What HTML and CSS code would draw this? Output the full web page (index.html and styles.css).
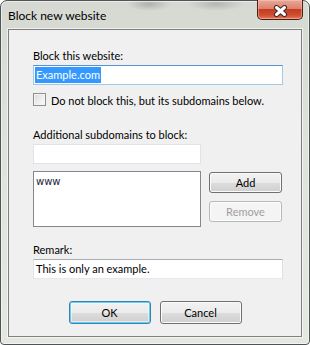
FILE: index.html
```html
<!DOCTYPE html>
<html lang="en">
<head>
    <meta charset="UTF-8">
    <meta name="viewport" content="width=device-width, initial-scale=1.0">
    <title>Block new website</title>
    <link rel="stylesheet" href="styles.css">
</head>
<body>
    <div class="window">
        <div class="titlebar">
            <span class="title">Block new website</span>
            <button class="close-btn" aria-label="Close">
                <svg width="15" height="12" viewBox="0 0 15 12">
                    <path d="M3.5 2.5 L11.5 9.5 M11.5 2.5 L3.5 9.5" stroke="#3b2a26" stroke-width="5" stroke-linecap="round"/>
                    <path d="M3.5 2.5 L11.5 9.5 M11.5 2.5 L3.5 9.5" stroke="#ffffff" stroke-width="3" stroke-linecap="round"/>
                </svg>
            </button>
        </div>

        <div class="client">
            <div class="label">Block this website:</div>
            <div class="textbox focused"><span class="selected">Example.com</span></div>

            <div class="check-row">
                <span class="checkbox"></span>
                <span class="check-text">Do not block this, but its subdomains below.</span>
            </div>

            <div class="label second">Additional subdomains to block:</div>
            <div class="textbox short"></div>

            <div class="list-row">
                <div class="listbox">www</div>
                <div class="side-buttons">
                    <button class="btn small">Add</button>
                    <button class="btn small" disabled>Remove</button>
                </div>
            </div>

            <div class="label third">Remark:</div>
            <div class="textbox">This is only an example.</div>

            <div class="dialog-buttons">
                <button class="btn wide default">OK</button>
                <button class="btn wide">Cancel</button>
            </div>
        </div>
    </div>
</body>
</html>
```

FILE: styles.css
```css
* {
    margin: 0;
    padding: 0;
    box-sizing: border-box;
}

body {
    font-family: Lato, 'Liberation Sans', sans-serif;
    font-size: 11px;
    color: #000;
    background: #fff;
}

.window {
    width: 310px;
    height: 345px;
    display: flex;
    flex-direction: column;
    padding: 0 7px 7px 7px;
    border: 1px solid #4f5457;
    border-radius: 7px 7px 4px 4px;
    background:
        radial-gradient(ellipse 22px 7px at 148px 3px, rgba(120, 120, 115, 0.4), transparent),
        radial-gradient(ellipse 28px 7px at 215px 3px, rgba(120, 120, 115, 0.35), transparent),
        linear-gradient(180deg, #d6d8d2 0%, #dfe1db 40%, #e5e7e1 100%);
    box-shadow: inset 0 0 0 1px rgba(255, 255, 255, 0.55);
}

.titlebar {
    height: 28px;
    display: flex;
    justify-content: space-between;
    align-items: flex-start;
}

.title {
    font-size: 12px;
    line-height: 15px;
    margin-top: 7px;
}

.close-btn {
    width: 46px;
    height: 20px;
    margin-top: -1px;
    margin-right: -1px;
    border: 1px solid #4a1c12;
    border-top: none;
    border-radius: 0 0 5px 5px;
    background: linear-gradient(180deg, #e9a99a 0%, #dc826e 45%, #c53d20 50%, #cf4e30 80%, #e57a5c 100%);
    box-shadow: inset 0 0 0 1px rgba(255, 210, 200, 0.45);
    display: flex;
    justify-content: center;
    align-items: center;
    padding-top: 2px;
}

.client {
    flex: 1;
    display: flex;
    flex-direction: column;
    padding: 19px 18px 0 24px;
    background: #f0f0f0;
    border: 1px solid #7d7f80;
    box-shadow: 0 0 0 1px rgba(255, 255, 255, 0.6);
}

.label {
    line-height: 14px;
}

.label.second {
    margin-top: 20px;
}

.label.third {
    margin-top: 16px;
}

.textbox {
    width: 250px;
    height: 20px;
    margin-top: 2px;
    padding: 1px 2px;
    background: #fff;
    border: 1px solid;
    border-color: #abadb3 #dbdfe6 #e3e9ef #e2e3ea;
    font-size: 11px;
    line-height: 16px;
    white-space: nowrap;
}

.textbox.focused {
    padding-left: 1px;
    border-color: #5593d2 #a4c9e3 #a4c9e3 #a4c9e3;
}

.textbox.short {
    width: 168px;
    border-color: #e2e3ea;
}

.selected {
    display: inline-block;
    padding: 0 1px;
    background: #3399ff;
    color: #fff;
}

.check-row {
    display: flex;
    align-items: flex-start;
    gap: 5px;
    margin-top: 8px;
    line-height: 14px;
}

.checkbox {
    width: 13px;
    height: 13px;
    border: 1px solid #8e8f8f;
    background: linear-gradient(135deg, #d9d9d9 0%, #ededed 50%, #fbfbfb 100%);
    box-shadow: inset 0 0 0 1px #f4f4f4;
}

.check-text {
    margin-top: 1px;
}

.list-row {
    display: flex;
    gap: 8px;
    margin-top: 7px;
}

.listbox {
    width: 168px;
    height: 56px;
    padding: 4px 2px;
    background: #fff;
    border: 1px solid #828790;
    font-family: 'DejaVu Sans', sans-serif;
    font-size: 10px;
    line-height: 12px;
    color: #1a1a3a;
}

.side-buttons {
    display: flex;
    flex-direction: column;
    gap: 8px;
    padding-top: 1px;
}

.btn {
    font-family: Lato, 'Liberation Sans', sans-serif;
    font-size: 11px;
    color: #000;
    border: 1px solid #707070;
    border-radius: 3px;
    background: linear-gradient(180deg, #f2f2f2 0%, #ebebeb 50%, #dddddd 51%, #cfcfcf 100%);
    box-shadow: inset 0 0 0 1px #fbfbfb;
}

.btn.small {
    width: 73px;
    height: 21px;
}

.btn:disabled {
    color: #a0a0a0;
    border-color: #b5b9bb;
    background: #f4f4f4;
    box-shadow: inset 0 0 0 1px #fcfcfc;
}

.dialog-buttons {
    display: flex;
    justify-content: center;
    gap: 9px;
    margin-top: 22px;
    margin-left: -24px;
    margin-right: -18px;
}

.btn.wide {
    width: 82px;
    height: 23px;
}

.btn.default {
    border-color: #3c7fb1;
    box-shadow: inset 0 0 0 1px #63d1f6, inset 0 0 0 2px rgba(255, 255, 255, 0.5);
}
```
